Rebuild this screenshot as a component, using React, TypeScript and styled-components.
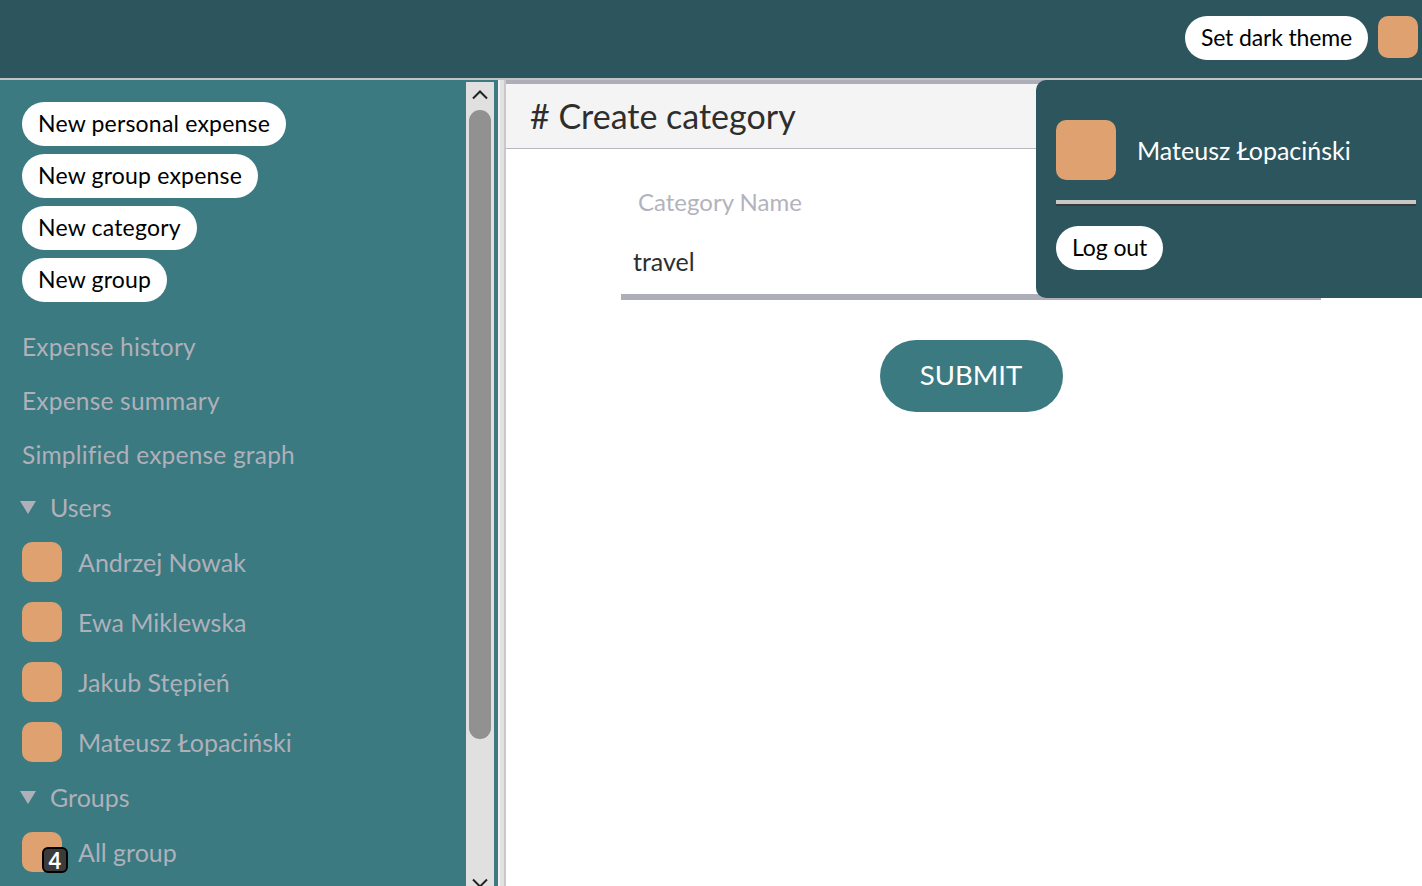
import React, {FunctionComponent} from 'react';
import styled, {createGlobalStyle} from 'styled-components';

const GlobalStyle = createGlobalStyle`
  html, body {
    margin: 0;
    height: 100%;
    overflow: hidden;
    font-family: 'Lato', 'Liberation Sans', sans-serif;
    font-variant-ligatures: none;
  }
`;

const Page = styled.div`
  position: relative;
  display: flex;
  flex-direction: column;
  width: 1422px;
  height: 886px;
  overflow: hidden;
  background-color: #fff;
`;

const TopBar = styled.header`
  display: flex;
  flex: 0 0 80px;
  box-sizing: border-box;
  align-items: flex-start;
  justify-content: flex-end;
  gap: 10px;
  padding: 16px 4px 0 0;
  background-color: #2d555d;
  border-bottom: 2px solid #c4c4c6;
`;

const Pill = styled.button`
  height: 44px;
  padding: 0 16px 2px;
  border: 0;
  border-radius: 22px;
  background-color: #fff;
  color: #000;
  font-family: inherit;
  font-size: 23px;
  letter-spacing: 0.2px;
  white-space: nowrap;
`;

const ThemePill = styled(Pill)`
  letter-spacing: -0.15px;
`;

const LogoutPill = styled(Pill)`
  letter-spacing: -0.1px;
`;

const Avatar = styled.div<{$size: number}>`
  flex: 0 0 auto;
  width: ${({$size}) => $size}px;
  height: ${({$size}) => $size}px;
  border-radius: 10px;
  background-color: #dea16f;
`;

const TopAvatar = styled(Avatar)`
  height: 42px;
`;

const Body = styled.div`
  display: flex;
  flex: 1;
  min-height: 0;
`;

const Sidebar = styled.aside`
  display: flex;
  flex: 0 0 498px;
  padding-right: 4px;
  box-sizing: border-box;
  background-color: #3a7a80;
`;

const SideContent = styled.nav`
  flex: 1;
  min-width: 0;
  padding: 22px 0 0 22px;
  overflow: hidden;
`;

const PillStack = styled.div`
  display: flex;
  flex-direction: column;
  align-items: flex-start;
  gap: 8px;
  margin-bottom: 18px;
`;

const NavLink = styled.div`
  height: 54px;
  color: #b0b0ba;
  font-size: 24.5px;
  letter-spacing: 0.2px;
  line-height: 54px;
  white-space: nowrap;
`;

const SectionRow = styled.div`
  display: flex;
  align-items: center;
  gap: 14px;
  height: 50px;
  margin-left: -2px;
  color: #b0b0ba;
  font-size: 25px;
`;

const Caret = styled.span`
  width: 0;
  height: 0;
  border-left: 8px solid transparent;
  border-right: 8px solid transparent;
  border-top: 13px solid #b0b0ba;
`;

const PersonRow = styled.div`
  display: flex;
  align-items: center;
  gap: 16px;
  height: 60px;
  color: #b0b0ba;
  font-size: 25px;
  white-space: nowrap;
`;

const AvatarHolder = styled.div`
  position: relative;
  flex: 0 0 40px;
`;

const Badge = styled.span`
  position: absolute;
  right: -6px;
  bottom: -1px;
  width: 26px;
  height: 26px;
  box-sizing: border-box;
  border: 2px solid #000;
  border-radius: 6px;
  background-color: #3b3b3b;
  color: #fff;
  font-size: 22px;
  font-weight: 700;
  line-height: 23px;
  text-align: center;
`;

const ScrollTrack = styled.div`
  display: flex;
  flex: 0 0 28px;
  flex-direction: column;
  align-items: center;
  height: 814px;
  margin-top: 2px;
  background-color: #e0e0e0;
`;

const ScrollArrow = styled.svg`
  flex: 0 0 28px;
  display: block;
`;

const ScrollThumb = styled.div`
  flex: 0 0 629px;
  width: 22px;
  border-radius: 11px;
  background-color: #919191;
`;

const ScrollGap = styled.div`
  flex: 1;
`;

const Splitter = styled.div`
  flex: 0 0 8px;
  box-sizing: border-box;
  border-left: 2px solid #f0f0f0;
  border-right: 2px solid #c8c8c8;
  background-color: #e2e2e2;
`;

const Main = styled.main`
  flex: 1;
  min-width: 0;
  box-sizing: border-box;
  border-top: 4px solid #aeaeb8;
`;

const MainHeader = styled.div`
  height: 64px;
  padding-left: 24px;
  border-bottom: 1px solid #b8b8c0;
  background-color: #f4f4f4;
  color: #2e2e2e;
  font-size: 34px;
  line-height: 63px;
`;

const Form = styled.form`
  display: flex;
  flex-direction: column;
  width: 700px;
  margin-left: 115px;
  padding-top: 35px;
`;

const FieldLabel = styled.label`
  padding-left: 17px;
  color: #b3b3bd;
  font-size: 24px;
  line-height: 36px;
`;

const FieldValue = styled.div`
  height: 52px;
  padding: 22px 0 0 12px;
  border-bottom: 6px solid #aeaeb8;
  color: #2e2e2e;
  font-size: 25px;
  line-height: 38px;
`;

const Submit = styled.button`
  align-self: center;
  width: 183px;
  height: 72px;
  padding-bottom: 5px;
  margin-top: 40px;
  border: 0;
  border-radius: 36px;
  background-color: #3a7a80;
  color: #fff;
  font-family: inherit;
  font-size: 27.5px;
`;

const ProfileMenu = styled.div`
  position: absolute;
  top: 80px;
  right: 0;
  width: 386px;
  height: 218px;
  box-sizing: border-box;
  padding: 40px 6px 0 20px;
  border-radius: 10px 0 0 10px;
  background-color: #2d555d;
`;

const ProfileRow = styled.div`
  display: flex;
  align-items: center;
  gap: 21px;
  padding-bottom: 20px;
  border-bottom: 4px solid #c8c8c6;
  box-shadow: 0 2px 0 #3b3b3b;
  color: #fff;
  font-size: 25px;
`;

const LogoutRow = styled.div`
  margin-top: 22px;
`;

const users = ['Andrzej Nowak', 'Ewa Miklewska', 'Jakub Stępień', 'Mateusz Łopaciński'];
const actions = ['New personal expense', 'New group expense', 'New category', 'New group'];
const links = ['Expense history', 'Expense summary', 'Simplified expense graph'];

const App: FunctionComponent = () => {
  return (
    <Page>
      <GlobalStyle />
      <TopBar>
        <ThemePill>Set dark theme</ThemePill>
        <TopAvatar $size={40} />
      </TopBar>
      <Body>
        <Sidebar>
          <SideContent>
            <PillStack>
              {actions.map((a) => (
                <Pill key={a}>{a}</Pill>
              ))}
            </PillStack>
            {links.map((l) => (
              <NavLink key={l}>{l}</NavLink>
            ))}
            <SectionRow>
              <Caret />
              Users
            </SectionRow>
            {users.map((u) => (
              <PersonRow key={u}>
                <Avatar $size={40} />
                {u}
              </PersonRow>
            ))}
            <SectionRow>
              <Caret />
              Groups
            </SectionRow>
            <PersonRow>
              <AvatarHolder>
                <Avatar $size={40} />
                <Badge>4</Badge>
              </AvatarHolder>
              All group
            </PersonRow>
          </SideContent>
          <ScrollTrack>
            <ScrollArrow width="28" height="28" viewBox="0 0 28 28">
              <path d="M7 16.5 14 9.5 21 16.5" fill="none" stroke="#222" strokeWidth="2" />
            </ScrollArrow>
            <ScrollThumb />
            <ScrollGap />
            <ScrollArrow width="28" height="28" viewBox="0 0 28 28">
              <path d="M7 11.5 14 18.5 21 11.5" fill="none" stroke="#222" strokeWidth="2" />
            </ScrollArrow>
          </ScrollTrack>
        </Sidebar>
        <Splitter />
        <Main>
          <MainHeader># Create category</MainHeader>
          <Form>
            <FieldLabel>Category Name</FieldLabel>
            <FieldValue>travel</FieldValue>
            <Submit type="button">SUBMIT</Submit>
          </Form>
        </Main>
      </Body>
      <ProfileMenu>
        <ProfileRow>
          <Avatar $size={60} />
          Mateusz Łopaciński
        </ProfileRow>
        <LogoutRow>
          <LogoutPill>Log out</LogoutPill>
        </LogoutRow>
      </ProfileMenu>
    </Page>
  );
};

export default App;
